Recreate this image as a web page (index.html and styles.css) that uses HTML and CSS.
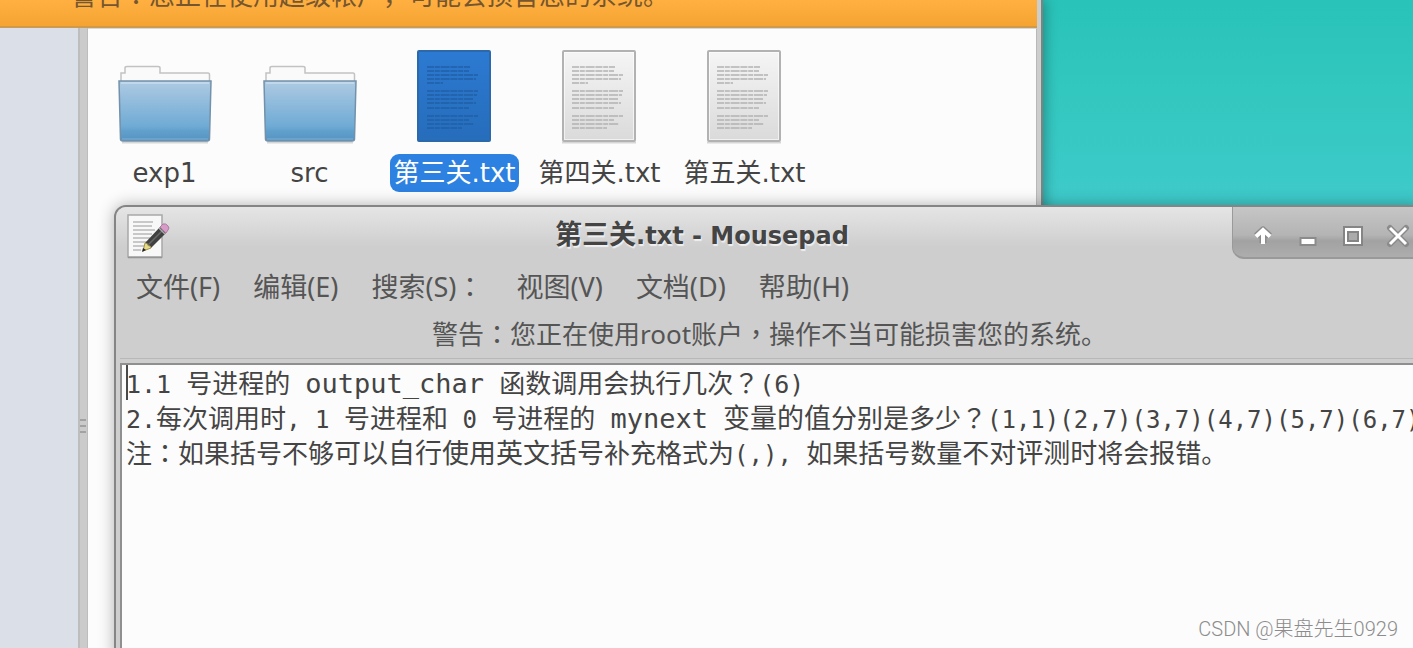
FILE: index.html
```html
<!DOCTYPE html>
<html lang="zh-CN">
<head>
<meta charset="utf-8">
<title>第三关.txt - Mousepad</title>
<link rel="stylesheet" href="styles.css">
</head>
<body>
<svg class="defs" aria-hidden="true">
  <defs>
    <linearGradient id="folder-fill" x1="0" y1="0" x2="0" y2="1">
      <stop offset="0" stop-color="#aecae2"/><stop offset="0.75" stop-color="#70abd5"/><stop offset="0.83" stop-color="#62a0cc"/><stop offset="1" stop-color="#5592c2"/>
    </linearGradient>
    <linearGradient id="paper-fill" x1="0" y1="0" x2="0" y2="1">
      <stop offset="0" stop-color="#f5f5f5"/><stop offset="1" stop-color="#dadada"/>
    </linearGradient>
    <linearGradient id="picked-fill" x1="0" y1="0" x2="0" y2="1">
      <stop offset="0" stop-color="#2c7ad2"/><stop offset="1" stop-color="#266dbb"/>
    </linearGradient>
    <symbol id="folder" viewBox="0 0 96 96">
      <path d="M5 94.500H91" stroke="#000" stroke-opacity=".15" stroke-width="2"/>
      <path d="M4 40V25H8V20Q8 18.500 10 18.500H41Q43 18.500 43 20V25H91Q92.500 25 92.500 27V40Z" fill="#fafafa" stroke="#c2c2c2" stroke-width="1.500"/>
      <path d="M2 33H94L92.500 91Q92.500 93 90 93H6Q3.500 93 3.500 91Z" fill="url(#folder-fill)" stroke="#7391aa" stroke-width="1.500"/>
      <path d="M4 35H92" stroke="#c9dded" stroke-width="1.500"/>
      <path d="M5 91H91" stroke="#7fb0d5" stroke-width="1"/>
    </symbol>
    <symbol id="text-lines" viewBox="0 0 96 96">
      <path stroke-width="1.600" stroke-dasharray="7 .8 5 .8 9 .8" d="M20 19H63M20 23H62M20 27H71M20 31H69M20 35H36M20 43H71M20 47H70M20 51H66M20 55H69M20 60H62M20 68H71M20 72H62M20 76H67M20 80H55"/>
    </symbol>
    <symbol id="document" viewBox="0 0 96 96">
      <path d="M10 94.500H84" stroke="#000" stroke-opacity=".15" stroke-width="2"/>
      <rect x="11" y="3" width="72" height="90" rx="1" fill="url(#paper-fill)" stroke="#b2b2b2" stroke-width="2"/>
      <rect x="12.500" y="4.500" width="69" height="87" fill="none" stroke="#fff" stroke-opacity=".6"/>
      <use href="#text-lines" stroke="#b2b2b2"/>
    </symbol>
    <symbol id="document-picked" viewBox="0 0 96 96">
      <rect x="11" y="3" width="72" height="90" rx="1" fill="url(#picked-fill)" stroke="#2b69ab" stroke-width="2"/>
      <use href="#text-lines" stroke="#205fa6"/>
    </symbol>
  </defs>
</svg>

<main class="desktop">
  <section class="window files">
    <div class="files-warning"><span>警告<span lang="zh-TW" class="mid">：</span>您正在使用超级帐户，可能会损害您的系统。</span></div>
    <div class="files-body">
      <aside class="sidebar"></aside>
      <div class="divider"><i></i><i></i><i></i></div>
      <ul class="icons">
        <li class="file"><svg><use href="#folder"/></svg><span class="name">exp1</span></li>
        <li class="file"><svg><use href="#folder"/></svg><span class="name">src</span></li>
        <li class="file picked"><svg><use href="#document-picked"/></svg><span class="name">第三关.txt</span></li>
        <li class="file"><svg><use href="#document"/></svg><span class="name">第四关.txt</span></li>
        <li class="file"><svg><use href="#document"/></svg><span class="name">第五关.txt</span></li>
      </ul>
    </div>
  </section>

  <section class="window mousepad">
    <header class="titlebar">
      <svg class="app-icon" viewBox="0 0 48 48">
        <rect x="4" y="2" width="34" height="42" fill="#f8f8f8" stroke="#a8a8a8" stroke-width="1.500"/>
        <path d="M4 44.500H38" stroke="#959595" stroke-width="1.500"/>
        <path stroke="#b8b8b8" stroke-width="1.400" d="M9 9H29M9 13H28M9 17H31M9 21H28M9 25H26M9 29H24M9 33H20M9 37H17"/>
        <path d="M21 30L36 14L42 20L27 35Z" fill="#404040"/>
        <path d="M24 32L39 17" stroke="#686868" stroke-width="1.500"/>
        <path d="M21 30Q24 30 24 32.500Q27 32.500 27 35L19 38Z" fill="#e8db85" stroke="#9b914f"/>
        <path d="M19 35L22 37L18 39Z" fill="#222"/>
        <path d="M36 14L39 11Q42 10 44 13Q46 15 44 17L42 20Z" fill="#d79bc7" stroke="#b17aa4"/>
        <path d="M35 15L41 21" stroke="#aaa" stroke-width="1.500"/>
      </svg>
      <h1 class="title"><span class="title-han">第三关</span>.txt - Mousepad</h1>
      <div class="controls">
        <button type="button" aria-label="Shade"><svg viewBox="0 0 24 24"><path d="M12 19V6M5.500 12L12 6L18.500 12" stroke="#8b8b8b" stroke-width="7" stroke-linejoin="round"/><path d="M12 20V6M5 12.500L12 6L19 12.500" stroke="#fff" stroke-width="4"/></svg></button>
        <button type="button" aria-label="Minimize"><svg viewBox="0 0 24 24"><rect x="4.500" y="14" width="15" height="7" fill="#fff" stroke="#8b8b8b" stroke-width="2"/></svg></button>
        <button type="button" aria-label="Maximize"><svg viewBox="0 0 24 24"><rect x="2" y="2" width="20" height="20" fill="#858585"/><rect x="4" y="4" width="16" height="16" fill="#fff"/><rect x="6" y="7" width="12" height="11" fill="#858585"/><rect x="8" y="9" width="8" height="7" fill="#ababab"/></svg></button>
        <button type="button" aria-label="Close"><svg viewBox="0 0 24 24"><path d="M4 4L20 20M20 4L4 20" stroke="#8b8b8b" stroke-width="6" stroke-linecap="round"/><path d="M4 4L20 20M20 4L4 20" stroke="#fff" stroke-width="3"/></svg></button>
      </div>
    </header>
    <nav class="menu">
      <button type="button">文件(F)</button>
      <button type="button">编辑(E)</button>
      <button type="button">搜索(S)<span lang="zh-TW" class="mid">：</span></button>
      <button type="button">视图(V)</button>
      <button type="button">文档(D)</button>
      <button type="button">帮助(H)</button>
    </nav>
    <p class="root-warning">警告<span lang="zh-TW" class="mid">：</span>您正在使用root账户<span lang="zh-TW" class="mid">，</span>操作不当可能损害您的系统。</p>
    <div class="editor" role="textbox" aria-multiline="true" aria-label="第三关.txt" contenteditable="true" spellcheck="false">
      <div class="line caret"><b>1.1 </b>号进程的<b> </b><em>output_char</em><b> </b>函数调用会执行几次<span lang="zh-TW" class="mid">？</span><b>(6)</b></div>
      <div class="line"><b>2.</b>每次调用时<b class="tight">, 1 </b>号进程和<b class="tight"> 0 </b>号进程的<b> </b><em>mynext</em><b> </b><span class="large">变量的值</span>分别是多少<span lang="zh-TW" class="mid">？</span><b class="tight">(1,1)(2,7)(3,7)(4,7)(5,7)(6,7)</b></div>
      <div class="line">注<span lang="zh-TW" class="mid">：</span>如果括号不够<span class="large">可以自行使用英文括号</span>补充格式为<b class="tight">(,), </b>如果括号数量<span class="large">不对评测时</span>将会报错。</div>
    </div>
  </section>
  <div class="watermark">CSDN @果盘先生0929</div>
</main>
</body>
</html>
```
FILE: styles.css
```css
* {
  box-sizing: border-box;
}

body {
  margin: 0;
  font-family: "DejaVu Sans", "Noto Sans CJK SC", sans-serif;
  font-size: 26px;
  color: #444;
}

.defs {
  position: absolute;
  width: 0;
  height: 0;
}

.desktop {
  position: relative;
  height: 100vh;
  overflow: hidden;
  background: linear-gradient(#29c3b9, #32c7bf 90px, #3ecaca 200px);
}

.window {
  position: absolute;
  display: flex;
  flex-direction: column;
}

.mid {
  font-family: "Noto Sans CJK TC", sans-serif;
}

/* File manager */
.files {
  top: 0;
  bottom: 0;
  left: 0;
  right: 370px;
  padding-right: 4px;
  background: #cdcdcd;
  border-right: 2px solid #778583;
  box-shadow: 2px 0 12px rgba(0, 0, 0, 0.3);
}

.files-warning {
  height: 28px;
  padding: 0 0 9px 71px;
  display: flex;
  align-items: flex-end;
  line-height: 44px;
  overflow: hidden;
  white-space: nowrap;
  font-family: "Noto Sans", "Noto Sans CJK SC", sans-serif;
  color: #76562f;
  background: linear-gradient(#ffb041, #f5a432);
  border-bottom: 2px solid #cf9a4c;
}

.files-body {
  flex: 1;
  display: flex;
}

.sidebar {
  width: 78px;
  background: #dadfe8;
}

.divider {
  width: 10px;
  display: flex;
  flex-direction: column;
  justify-content: center;
  gap: 4px;
  padding: 175px 1px 0 0;
  background: #cbcbcb;
  border-left: 2px solid #bdbdbd;
  border-right: 1px solid #bdbdbd;
}

.divider i {
  height: 2px;
  background: #a2a2a2;
}

.icons {
  flex: 1;
  margin: 0;
  padding: 19px 0 0 4px;
  list-style: none;
  display: flex;
  align-items: flex-start;
  background: #fcfcfc;
  border-top: 1px solid #d8d8d8;
  border-right: 1px solid #b8b8b8;
}

.file {
  width: 145px;
  display: flex;
  flex-direction: column;
  align-items: center;
  gap: 10px;
}

.file svg {
  width: 96px;
  height: 96px;
}

.name {
  padding: 0 3px;
  line-height: 38px;
  border-radius: 9px;
  white-space: nowrap;
}

.picked .name {
  color: #fff;
  background: #2d81e0;
}

/* Editor window */
.mousepad {
  top: 205px;
  bottom: -12px;
  left: 114px;
  right: -12px;
  background: #cecece;
  border: 2px solid #858585;
  border-radius: 12px 12px 0 0;
  box-shadow: 0 0 16px rgba(0, 0, 0, 0.3);
}

.titlebar {
  height: 54px;
  display: flex;
  align-items: flex-start;
  padding-left: 8px;
  border-radius: 10px 10px 0 0;
  background: linear-gradient(#e5e5e5, #cecece 40px);
}

.app-icon {
  width: 48px;
  height: 48px;
  margin-top: 6px;
}

.title {
  flex: 1;
  margin: 0;
  text-align: center;
  font-size: 24px;
  line-height: 56px;
  text-shadow: 1px 2px 1px #f0f0f0;
}

.title-han {
  font-size: 27px;
}

.controls {
  height: 52px;
  display: flex;
  padding: 0 3px 0 7px;
  border-left: 1px solid #9a9a9a;
  border-bottom: 2px solid #999;
  border-radius: 0 0 0 12px;
  background: linear-gradient(#c6c6c6, #b4b4b4 28px, #a2a2a2 34px, #adadad);
}

.controls button {
  width: 45px;
  padding: 7px 0 0;
  border: 0;
  background: none;
}

.controls svg {
  width: 24px;
  height: 24px;
  display: block;
  margin: auto;
  fill: none;
}

.menu {
  display: flex;
  gap: 33px;
  padding: 5px 20px 0;
}

.menu button {
  padding: 0;
  border: 0;
  background: none;
  font: 27px/40px "Noto Sans", "Noto Sans CJK SC", sans-serif;
  color: #555;
  white-space: nowrap;
}

.root-warning {
  margin: 0 4px;
  padding: 5px 0 3px;
  text-align: center;
  font-family: "Noto Sans", "Noto Sans CJK SC", sans-serif;
  line-height: 42px;
  color: #555;
  border-bottom: 1px solid #b8b8b8;
}

.editor {
  flex: 1;
  margin: 4px 4px 0;
  padding: 0 4px;
  border: 2px solid #8f8f8f;
  background: #fcfcfc;
  white-space: nowrap;
}

.line {
  height: 35px;
  font-family: "Noto Sans CJK SC", sans-serif;
  line-height: 33px;
  white-space: pre;
}

.caret {
  box-shadow: inset 2px 0 #4a4a4a;
}

.line b,
.line em {
  font-family: "DejaVu Sans Mono", monospace;
  font-style: normal;
  font-weight: normal;
}

.line b {
  font-size: 25px;
}

.line .tight {
  font-size: 24px;
}

.line em,
.line .large {
  font-size: 27px;
}

.watermark {
  position: absolute;
  right: 15px;
  bottom: 4px;
  font-family: Roboto, "Noto Sans CJK SC", sans-serif;
  font-size: 20px;
  font-weight: 300;
  line-height: 30px;
  color: #8c8c8c;
}
```
